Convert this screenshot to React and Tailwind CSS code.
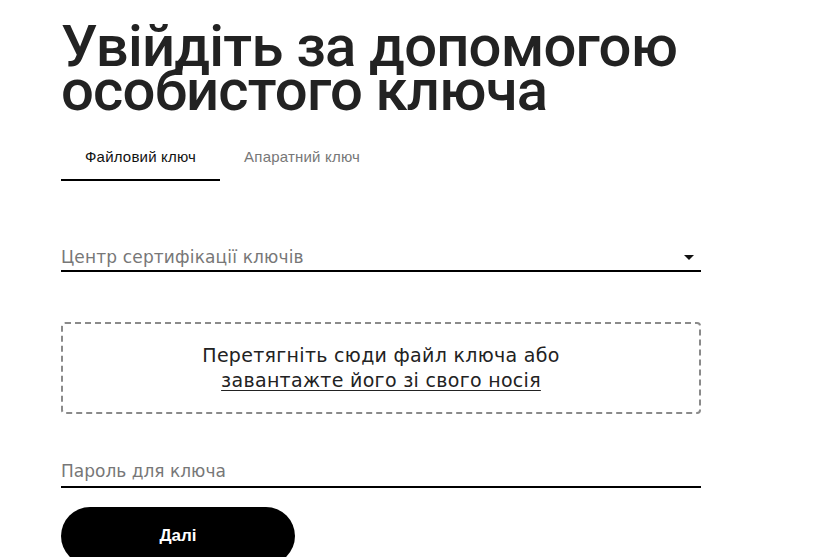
import React, { useState } from "react";

const arial = { fontFamily: '"Liberation Sans", Arial, sans-serif' };

function Tabs() {
  const [active, setActive] = useState(0);
  const tabs = ["Файловий ключ", "Апаратний ключ"];
  return (
    <div className="flex">
      {tabs.map((t, i) => (
        <button
          key={t}
          onClick={() => setActive(i)}
          className={
            i === active
              ? "px-6 h-[45px] border-b-2 border-black text-[15px] tracking-[0.2px] text-[#111]"
              : "px-6 h-[45px] border-b-2 border-transparent text-[15px] tracking-[0.2px] text-[#777]"
          }
        >
          {t}
        </button>
      ))}
    </div>
  );
}

export default function App() {
  return (
    <div className="bg-white min-h-[557px] overflow-hidden" style={arial}>
      <div className="w-[640px] ml-[61px]">
        <h1 className="pt-[24px] font-['Roboto'] font-medium text-[58px] leading-[44px] tracking-[-0.8px] text-[#222] whitespace-nowrap">
          Увійдіть за допомогою
          <br />
          особистого ключа
        </h1>

        <div className="mt-[24px]">
          <Tabs />
        </div>

        <div className="mt-[65px] flex items-center justify-between border-b-2 border-black pb-[2px] font-['DejaVu_Sans']">
          <span className="text-[17px] tracking-[0.15px] text-[#777] leading-[22px]">
            Центр сертифікації ключів
          </span>
          <svg width="10" height="5" viewBox="0 0 10 5" className="mr-[7px]">
            <path d="M0 0h10L5 5z" fill="#111" />
          </svg>
        </div>

        <div className="mt-[50px] h-[92px] border-2 border-dashed border-[#8a8a8a] rounded-[4px] flex flex-col items-center justify-center font-['DejaVu_Sans'] text-[19px] tracking-[0.3px] leading-[25px] text-[#222]">
          <span>Перетягніть сюди файл ключа або</span>
          <a href="#" className="underline underline-offset-[3px]">
            завантажте його зі свого носія
          </a>
        </div>

        <div className="mt-[45px] border-b-2 border-black pb-[2px] font-['DejaVu_Sans']">
          <input
            placeholder="Пароль для ключа"
            className="w-full outline-none text-[17px] leading-[24px] placeholder:text-[#777]"
          />
        </div>

        <button className="mt-[19px] w-[234px] h-[58px] rounded-full bg-black text-white font-bold text-[17px]">
          Далі
        </button>
      </div>
    </div>
  );
}
